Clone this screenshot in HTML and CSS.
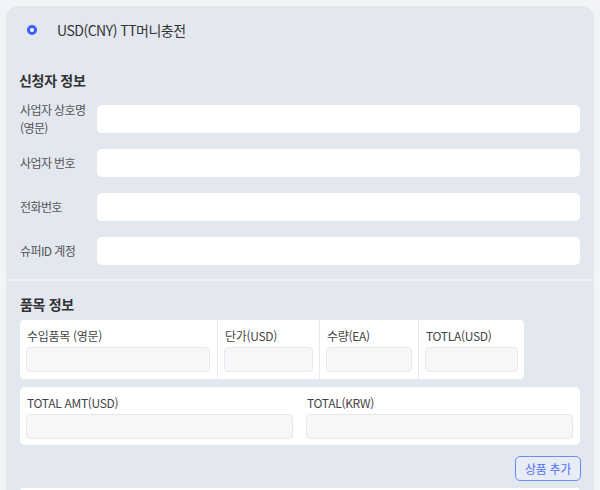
FILE: index.html
```html
<!DOCTYPE html>
<html lang="ko">
<head>
<meta charset="utf-8">
<link rel="stylesheet" href="styles.css">
</head>
<body>
<div class="card">
  <section class="sec sec-top">
    <div class="option">
      <span class="radio"></span>
      <span class="option-text">USD(CNY) TT머니충전</span>
    </div>
    <h2 class="sec-title">신청자 정보</h2>
    <div class="form">
      <div class="row"><label class="lbl">사업자 상호명<br>(영문)</label><div class="inp"></div></div>
      <div class="row"><label class="lbl">사업자 번호</label><div class="inp"></div></div>
      <div class="row"><label class="lbl">전화번호</label><div class="inp"></div></div>
      <div class="row"><label class="lbl">슈퍼ID 계정</label><div class="inp"></div></div>
    </div>
  </section>
  <section class="sec sec-items">
    <h2 class="sec-title">품목 정보</h2>
    <div class="items">
      <div class="cell"><div class="clbl">수입품목 (영문)</div><div class="cinp"></div></div>
      <div class="cell"><div class="clbl">단가(USD)</div><div class="cinp"></div></div>
      <div class="cell"><div class="clbl">수량(EA)</div><div class="cinp"></div></div>
      <div class="cell"><div class="clbl">TOTLA(USD)</div><div class="cinp"></div></div>
    </div>
    <div class="totals">
      <div class="cell"><div class="clbl">TOTAL AMT(USD)</div><div class="cinp"></div></div>
      <div class="cell"><div class="clbl">TOTAL(KRW)</div><div class="cinp"></div></div>
    </div>
    <div class="actions"><button class="btn">상품 추가</button></div>
    <div class="next"></div>
  </section>
</div>
</body>
</html>
```
FILE: styles.css
```css
* { box-sizing: border-box; }
html, body { margin: 0; padding: 0; }
body {
  background: #f3f4f8;
  font-family: "Noto Sans CJK KR", "Noto Sans", sans-serif;
  color: #333;
  height: 490px;
  overflow: hidden;
}
.card {
  margin: 6px 6px 0;
  background: #e3e7ef;
  border-radius: 12px 12px 0 0;
}
.sec-top {
  padding: 14px 14px 6px 13px;
  border-bottom: 2px solid #eef0f6;
}
.option {
  display: flex;
  align-items: center;
  height: 20px;
  padding-left: 8px;
  gap: 20px;
}
.radio {
  width: 10px;
  height: 10px;
  border-radius: 50%;
  border: 3px solid #3b5ef6;
  background: #fff;
}
.option-text {
  font-size: 14px;
  color: #333;
  letter-spacing: -0.5px;
}
.sec-title {
  margin: 0;
  font-size: 14px;
  font-weight: 700;
  line-height: 20px;
  color: #333;
  letter-spacing: -0.3px;
}
.sec-top .sec-title { margin-top: 30px; }
.form {
  margin-top: 7px;
  display: grid;
  grid-auto-rows: 44px;
}
.row {
  display: grid;
  grid-template-columns: 78px 1fr;
  align-items: center;
}
.lbl {
  font-size: 12px;
  line-height: 18px;
  color: #555;
  padding-left: 1px;
  letter-spacing: -0.6px;
}
.inp {
  height: 28px;
  background: #fff;
  border-radius: 5px;
}
.sec-items {
  padding: 13px 13px 0 14px;
}
.items {
  margin-top: 6px;
  display: grid;
  grid-template-columns: 197px 102px 99px 106px;
  width: 504px;
  background: #fff;
  border-radius: 4px;
}
.items .cell + .cell { border-left: 1px solid #e8eaee; }
.cell {
  padding: 7px 6px 7px 6px;
}
.items .cell:first-child { padding-right: 7px; }
.clbl {
  font-size: 12px;
  line-height: 18px;
  color: #444;
  padding-left: 1px;
  letter-spacing: -0.3px;
}
.cinp {
  margin-top: 2px;
  height: 25px;
  background: #f6f7f9;
  border: 1px solid #e6e8ec;
  border-radius: 4px;
}
.totals {
  margin-top: 8px;
  display: grid;
  grid-template-columns: 1fr 1fr;
  width: 560px;
  background: #fff;
  border-radius: 5px;
}
.totals .cell { padding: 7px 7px 6px 6px; }
.actions {
  display: flex;
  justify-content: flex-end;
  margin-top: 11px;
}
.btn {
  width: 66px;
  height: 25px;
  border: 1px solid #6f8cf2;
  border-radius: 5px;
  background: #e8ecf7;
  color: #4f6ef2;
  font-family: inherit;
  font-size: 12px;
  letter-spacing: -0.3px;
  padding: 0;
}
.next {
  margin-top: 7px;
  width: 560px;
  height: 20px;
  background: #fff;
  border-radius: 4px 4px 0 0;
}
```
